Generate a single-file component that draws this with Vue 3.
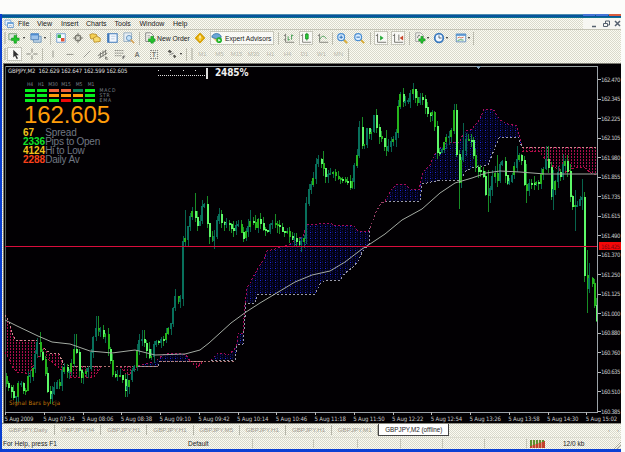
<template>
  <div class="screen">
    <svg class="defs" width="0" height="0">
      <symbol id="chart-add" viewBox="0 0 14 14">
        <path d="M1 2h9v7H1z" fill="#dfe6df" stroke="#779977" />
        <path d="M7 4h3v3h3v3h-3v3H7v-3H4V7h3z" fill="#1fc32a" stroke="#0d8a1a" stroke-width=".6" />
      </symbol>
      <symbol id="profiles" viewBox="0 0 14 14">
        <path d="M4 5h9v7H4z" fill="#bdd3e6" stroke="#6d94b6" />
        <path d="M1 2h9v7H1z" fill="#9dc3ea" stroke="#4b80b8" />
        <path d="M1 2h9v2H1z" fill="#4f8dd0" />
      </symbol>
      <symbol id="market" viewBox="0 0 14 14">
        <path d="M2 2h10v10H2z" fill="#f3f8ff" stroke="#6c9cd0" />
        <path d="M3 3h4v4H3z" fill="#2cb04b" />
        <path d="M7 7h4v4H7z" fill="#e05235" />
      </symbol>
      <symbol id="target" viewBox="0 0 14 14">
        <circle cx="7" cy="7" r="3.3" fill="none" stroke="#77776e" stroke-width="1.5" />
        <path d="M7 1v5M7 8v5M1 7h5M8 7h5" stroke="#77776e" />
      </symbol>
      <symbol id="folders" viewBox="0 0 14 14">
        <path d="M1 3l3-1 5 1v5H2z" fill="#f5d052" stroke="#b98c26" />
        <path d="M5 7l4-2 4 2v4l-7 1z" fill="#f7da6b" stroke="#b98c26" />
      </symbol>
      <symbol id="terminal" viewBox="0 0 14 14">
        <path d="M2 2h11v10H2z" fill="#f4f8ff" stroke="#3e78ba" stroke-width="1.2" />
        <path d="M2 2h2v10H2z" fill="#3e78ba" />
        <path d="M6 5h5M6 8h4" stroke="#bacbe0" />
      </symbol>
      <symbol id="tester" viewBox="0 0 14 14">
        <path d="M1 1h9v10H1z" fill="#e6edf3" stroke="#8fa9bf" />
        <circle cx="7" cy="7" r="3" fill="#c5e2fa" stroke="#5f8db8" />
        <path d="M9 9l4 4" stroke="#d8a65a" stroke-width="2" />
      </symbol>
      <symbol id="order" viewBox="0 0 14 14">
        <path d="M2 1h6l3 3v7H2z" fill="#f6f6f0" stroke="#777" />
        <path d="M4 4h3M4 6h5" stroke="#888" stroke-width=".7" />
        <path d="M8 5h3v3h2v3h-2v2H8v-2H5V8h3z" fill="#20c12a" stroke="#118419" stroke-width=".5" />
      </symbol>
      <symbol id="caution" viewBox="0 0 14 14">
        <path d="M7 2l5 5-5 5-5-5z" fill="#f6c425" stroke="#d7a000" stroke-linejoin="round" stroke-width="2" />
        <path d="M7 4v3.5M7 9v1" stroke="#fff" stroke-width="1.3" />
      </symbol>
      <symbol id="expert" viewBox="0 0 14 14">
        <path d="M2 7l5 5 5-5z" fill="#eac66b" />
        <path d="M1 6c0-5 10-6 11 0L6 8z" fill="#6ba6d6" stroke="#3c78ab" />
        <circle cx="9.5" cy="9.5" r="3.3" fill="#22b42a" />
        <path d="M8.5 7.8l2.8 1.7-2.8 1.7z" fill="#fff" />
      </symbol>
      <symbol id="bars" viewBox="0 0 14 14">
        <path d="M3 2v10h10M1 4h2M1 9h2" fill="none" stroke="#777770" />
        <path d="M6 5v5M6 9h2M10 3v6M10 4h2" stroke="#3b9a4a" />
      </symbol>
      <symbol id="candles" viewBox="0 0 14 14">
        <path d="M3 2v10h10M1 4h2" fill="none" stroke="#777770" />
        <path d="M8 1v9" stroke="#187c24" />
        <path d="M6.5 2.500h3v5.500h-3z" fill="#2bd03a" stroke="#158c20" />
      </symbol>
      <symbol id="line" viewBox="0 0 14 14">
        <path d="M3 2v10h10M1 4h2" fill="none" stroke="#777770" />
        <path d="M3 9q4-8 8-1" fill="none" stroke="#4a9a55" />
      </symbol>
      <symbol id="zoom-in" viewBox="0 0 14 14">
        <path d="M8 8l5 5" stroke="#d8ab35" stroke-width="2.4" />
        <circle cx="6" cy="6" r="4" fill="#d7ecff" stroke="#4c8fd2" stroke-width="1.4" />
        <path d="M4 6h4M6 4v4" stroke="#2e6fb8" stroke-width="1.2" />
      </symbol>
      <symbol id="zoom-out" viewBox="0 0 14 14">
        <path d="M8 8l5 5" stroke="#d8ab35" stroke-width="2.4" />
        <circle cx="6" cy="6" r="4" fill="#d7ecff" stroke="#4c8fd2" stroke-width="1.4" />
        <path d="M4 6h4" stroke="#2e6fb8" stroke-width="1.2" />
      </symbol>
      <symbol id="scroll" viewBox="0 0 14 14">
        <path d="M3 2v10h10M1 4h2" fill="none" stroke="#666660" />
        <path d="M6 4l4 3-4 3z" fill="#23a936" />
      </symbol>
      <symbol id="shift" viewBox="0 0 14 14">
        <path d="M3 2v10h10M1 4h2M8 3v7" fill="none" stroke="#666660" />
        <path d="M13 4L9 7l4 3z" fill="#c8452a" />
      </symbol>
      <symbol id="indicator" viewBox="0 0 14 14">
        <path d="M2 1h6l3 3v7H2z" fill="#f2f2ec" stroke="#999" />
        <path d="M4 7q1-5 3-3" fill="none" stroke="#666" />
        <path d="M8 5h2.500v3H13v2.500h-2.500V13H8v-2.500H5.500V8H8z" fill="#22bd2c" stroke="#118419" stroke-width=".5" />
      </symbol>
      <symbol id="clock" viewBox="0 0 14 14">
        <circle cx="7" cy="7" r="5" fill="#eef6ff" stroke="#3878bd" stroke-width="2" />
        <path d="M7 4v3h3" fill="none" stroke="#456" />
      </symbol>
      <symbol id="template" viewBox="0 0 14 14">
        <path d="M1.500 2.500h11v9h-11z" fill="#f1f7fd" stroke="#5785b4" />
        <path d="M1 2h12v2.500H1z" fill="#5b96d0" />
        <path d="M3 7l2-1 2 1 3-1" fill="none" stroke="#d06840" />
        <path d="M3 10l3-1 4 .5" fill="none" stroke="#3b9a4a" />
      </symbol>
      <symbol id="cursor" viewBox="0 0 14 14">
        <path d="M5 2v9l2-2 2 4 1.500-1-2-3.500h3z" fill="#333" />
      </symbol>
      <symbol id="cross" viewBox="0 0 14 14">
        <path d="M7 .5v5M7 8.500v5M.5 7h5M8.500 7h5" stroke="#777770" />
      </symbol>
      <symbol id="vline" viewBox="0 0 14 14"><path d="M7 3v8" stroke="#8a8a82" /></symbol>
      <symbol id="hline" viewBox="0 0 14 14"><path d="M3 7.500h8" stroke="#8a8a82" /></symbol>
      <symbol id="trend" viewBox="0 0 14 14"><path d="M3 11l8-8" stroke="#8a8a82" /></symbol>
      <symbol id="channel" viewBox="0 0 14 14">
        <path d="M1 9l10-6M2 12l10-6M4 5v6M7 3v7M10 2v6M10 10v3h3M10 11h2" fill="none" stroke="#6e6e68" />
      </symbol>
      <symbol id="fibo" viewBox="0 0 14 14">
        <path d="M1 3h10M1 6h10M1 9h8" stroke="#777770" stroke-dasharray="1.500 .6" />
        <path d="M10.500 13V9.500H13M10.500 11H12" fill="none" stroke="#555" />
      </symbol>
      <symbol id="arrows" viewBox="0 0 14 14">
        <path d="M2 4l2-2 3 2-2 2zM8 9l2-1 2 2-2 2z" fill="#55554f" />
        <path d="M4 8l5-2" stroke="#777" />
      </symbol>
      <symbol id="sheet" viewBox="0 0 14 14">
        <path d="M1.500 1.500h8v7h-8z" fill="#eaf4ff" stroke="#5a94cf" />
        <path d="M5 5h8v7H5z" fill="#f3f9ff" stroke="#3f7fc4" />
        <path d="M5 5h8v2H5z" fill="#6aa4dc" />
        <path d="M7 10l2-1 2 1" stroke="#888" fill="none" />
      </symbol>
    </svg>

    <div class="window">
      <div class="titlebar"><span class="min"></span><span class="max"></span><span class="close"></span></div>

      <div class="menubar">
        <svg class="doc" width="10" height="10"><use href="#sheet" /></svg>
        <span v-for="m in menus" :key="m.label" class="menu" :style="{ width: m.w + 'px' }">{{ m.label }}</span>
        <span class="mdi">
          <svg width="38" height="11" fill="none" stroke="#55606e">
            <path d="M9 8.500h4" stroke-width="1.500" />
            <path d="M20.500 5.500h4v3h-4zM22.500 5v-2h4v4h-2" />
            <path d="M32 3l5 5M37 3l-5 5" stroke-width="1.500" />
          </svg>
        </span>
      </div>

      <div v-for="(row, r) in toolbars" :key="r" class="toolbar">
        <div
          v-for="(t, i) in row"
          :key="i"
          class="tool"
          :class="[t.type, { on: t.on }]"
          :style="{ width: t.w + 'px' }"
        >
          <svg v-if="t.icon" width="12" height="12"><use :href="'#' + t.icon" /></svg>
          <span v-if="t.text">{{ t.text }}</span>
        </div>
      </div>

      <div class="chart">
        <svg width="618" height="360" viewBox="3 63 618 360" shape-rendering="crispEdges">
          <defs>
            <pattern id="blue" width="5" height="6" patternUnits="userSpaceOnUse">
              <rect width="5" height="6" fill="#010112" />
              <path d="M.5 0v6" stroke="#101066" stroke-dasharray="1 1" />
              <path d="M.5 4v1" stroke="#1c28e0" />
              <path d="M2.500 0v6" stroke="#0a0a4c" stroke-dasharray="2 1" />
            </pattern>
            <pattern id="red" width="3" height="3" patternUnits="userSpaceOnUse">
              <rect x="1" y="0" width="1" height="2" fill="#a80d4c" />
            </pattern>
          </defs>
          <rect x="3" y="63" width="618" height="360" fill="#020003" />
          <path d="M3 63.500h618M3.500 63v360" stroke="#77776f" />
          <path d="M5 66.500h592" stroke="#9aa3a3" />
          <path d="M5.500 66v346" stroke="#55605f" />
          <path d="M475 66h6l-3 3z" fill="#7d9bb0" />

          <path v-for="(c, i) in clouds" :key="'c' + i" :d="area(c)" :fill="`url(#${c.kind})`" />
          <g fill="none" stroke-dasharray="2 2">
            <template v-for="(c, i) in clouds" :key="'e' + i">
              <path :d="'M' + c.top" :stroke="c.kind === 'blue' ? '#a50b58' : '#c98b8b'" />
              <path :d="'M' + c.bottom" :stroke="c.kind === 'blue' ? '#9a9aa8' : '#b50c48'" />
            </template>
            <path d="M72 366.500H158M160 361.500H236" stroke="#ad7070" />
            <path d="M370 228L376 212L381 203L386 201" stroke="#9c4068" />
          </g>

          <g v-for="(c, i) in candles" :key="i">
            <rect :x="c.x" :y="c.high" width="1" :height="c.low - c.high" :fill="c.up ? '#07634d' : '#188c25'" />
            <rect :x="c.x - (c.up ? 1 : 0)" :y="c.y" :width="2" :height="c.h" :fill="c.fill" />
          </g>
          <path :d="'M' + average" fill="none" stroke="#a3aaa2" shape-rendering="auto" />
          <rect x="5" y="246" width="593" height="1" fill="#d80d3c" />

          <path d="M597.500 66V412.500M5 412.500H598" fill="none" stroke="#9ba2a8" />
          <g class="axis">
            <template v-for="(p, i) in prices" :key="p">
              <path :d="`M598 ${79.5 + Math.round(i * 19.53)}h3`" stroke="#b9b9b9" />
              <text x="601" :y="81.5 + i * 19.53" textLength="19.500">{{ p }}</text>
            </template>
            <template v-for="(t, i) in times" :key="t">
              <path :d="`M${Math.round(i * 38.75) + 5.5} 412v3`" stroke="#b9b9b9" />
              <text :x="4.5 + i * 38.75" y="420.800" :textLength="i ? 31.5 : 29">{{ t }}</text>
            </template>
          </g>
          <rect x="599" y="242" width="22" height="8" fill="#f40808" />
          <text class="small" x="601" y="248.500" textLength="19" fill="#7c0610">161.425</text>

          <text class="small" x="8" y="73" textLength="119.500" fill="#dedede">GBPJPY,M2&nbsp; 162.629 162.647 162.599 162.605</text>
          <g fill="#ddd">
            <rect v-for="x in [158, 170, 183, 195]" :key="x" :x="x" y="70" width="1" height="1" />
            <rect v-for="n in 24" :key="'d' + n" :x="156 + n * 2" y="75" width="1" height="1" />
            <rect x="206" y="68" width="2" height="11" />
          </g>
          <text class="percent" x="215" y="76" textLength="33.500">2485%</text>

          <g v-for="(s, i) in signals" :key="s.name">
            <text class="small head" :x="s.tx" y="86.300" text-anchor="middle">{{ s.name }}</text>
            <rect v-for="(f, k) in s.cells" :key="k" :x="25 + i * 12" :y="89 + k * 5" width="10" height="3" :fill="f" />
          </g>
          <text class="small head" x="99.500" y="92" textLength="16">MACD</text>
          <text class="small head" x="99.500" y="97" textLength="10">STR</text>
          <text class="small head" x="99.500" y="102" textLength="11.500">EMA</text>
          <text x="24" y="123" font-size="24" textLength="86" fill="#ff9d0a">162.605</text>
          <g v-for="(s, i) in stats" :key="s.label" font-size="10">
            <text x="23" :y="136 + i * 9.1" :textLength="s.w" font-weight="bold" :fill="s.color">{{ s.value }}</text>
            <text x="45.200" :y="136 + i * 9.1" :textLength="s.lw" fill="#707782">{{ s.label }}</text>
          </g>
          <text class="small" x="9" y="405" textLength="51" fill="#c77a08">Signal Bars by cja</text>
        </svg>
      </div>

      <div class="tabs">
        <span v-for="(t, i) in tabs" :key="i" class="tab">{{ t }}</span>
        <span class="tab active">GBPJPY,M2 (offline)</span>
        <span class="nav">‹ &nbsp;&nbsp; ›</span>
      </div>

      <div class="status">
        <span class="help">For Help, press F1</span>
        <span class="profile">Default</span>
        <span class="cell c1"></span>
        <span class="cell c2"></span>
        <span class="cell c2"></span>
        <span class="cell c3"></span>
        <span class="cell c3"></span>
        <span class="cell c3"></span>
        <span class="cell net">
          <svg width="15" height="8" shape-rendering="crispEdges">
            <path d="M0 4H15" stroke="#5c8f2c" stroke-width="8" stroke-dasharray="2 1" />
            <path d="M0 8V6L15 1V8z" fill="#c2412c" />
            <path d="M2.500 0v8M5.500 0v8M8.500 0v8M11.500 0v8" stroke="#e8c9a8" stroke-width=".6" />
          </svg>
          <span>12/0 kb</span>
        </span>
        <svg class="grip-corner" width="8" height="8"><path d="M1 8l7-7M4 8l4-4" stroke="#a5a598" /></svg>
      </div>
      <div class="bottom-edge"></div>
    </div>
  </div>
</template>

<script setup>
const menus = [
  { label: 'File', w: 19 },
  { label: 'View', w: 24 },
  { label: 'Insert', w: 25 },
  { label: 'Charts', w: 28.5 },
  { label: 'Tools', w: 25 },
  { label: 'Window', w: 33.5 },
  { label: 'Help', w: 20 }
]

const icon = (name, w = 14, on = false) => ({ type: 'icon', icon: name, w, on })
const gap = (w = 3) => ({ type: 'gap', w })
const sep = (w = 7) => ({ type: 'sep', w })
const caret = (w = 5) => ({ type: 'caret', w })
const label = (text, w) => ({ type: 'label', text, w })

const toolbars = [
  [
    { type: 'grip', w: 5 }, icon('chart-add'), caret(), gap(), icon('profiles', 13), caret(), sep(),
    icon('market'), gap(), icon('target'), gap(), icon('folders'), gap(), icon('terminal'), gap(), icon('tester'), sep(),
    icon('order'), label('New Order', 34), gap(2), icon('caution'), gap(),
    { type: 'button', icon: 'expert', text: 'Expert Advisors', w: 64, on: true }, sep(8),
    icon('bars'), gap(), icon('candles', 14, true), gap(), icon('line'), sep(5),
    icon('zoom-in'), gap(), icon('zoom-out'), sep(8),
    icon('scroll', 14, true), gap(), icon('shift', 14, true), sep(9),
    icon('indicator', 12), caret(3), gap(4), icon('clock', 12), caret(4), gap(6), icon('template', 12), caret(4), sep(4)
  ],
  [
    { type: 'grip', w: 5 }, icon('cursor', 15, true), gap(), icon('cross'), sep(6), gap(1),
    icon('vline'), gap(), icon('hline'), gap(), icon('trend'), gap(2), icon('channel'), gap(), icon('fibo'), gap(),
    { type: 'letter', text: 'A', w: 14 }, gap(), { type: 'letter boxed', text: 'T', w: 14 }, gap(4),
    icon('arrows'), caret(4), sep(7), { type: 'grip', w: 4 },
    ...['M1', 'M5', 'M15', 'M30', 'H1', 'H4', 'D1', 'W1', 'MN'].map((text) => ({ type: 'period', text, w: 17 })),
    sep(3)
  ]
]

const prices = [
  '162.470', '162.345', '162.225', '162.105', '161.980', '161.855', '161.735', '161.615', '161.490',
  '161.370', '161.250', '161.125', '161.000', '160.880', '160.760', '160.635', '160.510', '160.385'
]
const times = [
  '5 Aug 2009', '5 Aug 07:34', '5 Aug 08:06', '5 Aug 08:38', '5 Aug 09:10', '5 Aug 09:42', '5 Aug 10:14', '5 Aug 10:46',
  '5 Aug 11:18', '5 Aug 11:50', '5 Aug 12:22', '5 Aug 12:54', '5 Aug 13:26', '5 Aug 13:58', '5 Aug 14:30', '5 Aug 15:02'
]

const G = '#06f01e'
const O = '#ff9c08'
const signals = [
  { name: 'H4', tx: 30, cells: [G, G, G] },
  { name: 'H1', tx: 41, cells: [G, G, G] },
  { name: 'M30', tx: 53, cells: ['#f0643c', O, G] },
  { name: 'M15', tx: 66, cells: ['#f0643c', O, '#f00808'] },
  { name: 'M5', tx: 79, cells: ['#0b8058', O, G] },
  { name: 'M1', tx: 91, cells: [G, G, G] }
]

const stats = [
  { value: '67', w: 11, color: '#f2c21c', label: 'Spread', lw: 31.5 },
  { value: '2336', w: 22, color: '#10e428', label: 'Pips to Open', lw: 55 },
  { value: '4124', w: 22, color: '#f2c21c', label: 'Hi to Low', lw: 39.5 },
  { value: '2288', w: 22, color: '#f8401a', label: 'Daily Av', lw: 34.5 }
]

const tabs = ['GBPJPY,Daily', 'GBPJPY,H4', 'GBPJPY,H1', 'GBPJPY,H1', 'GBPJPY,M5', 'GBPJPY,H1', 'GBPJPY,H1', 'GBPJPY,M1']

const clouds = [
  {
    kind: 'red',
    top: '5 315 9 322 12 332 15 340 37 340 42 347 50 353 59 354 64 365 72 366 102 366',
    bottom: '5 352 8 357 13 368 17 372 30 374 36 358 42 355 52 362 58 367 64 372 70 377 94 377 102 366'
  },
  { kind: 'red', top: '120 366 139 366', bottom: '120 366 126 374 131 374 139 366' },
  { kind: 'blue', top: '138 366 154 362 163 355 172 353 180 353 186 355 190 361', bottom: '138 366 158 366 160 361 190 361' },
  { kind: 'red', top: '190 361 203 361', bottom: '190 361 197 368 203 361' },
  {
    kind: 'blue',
    top: '211 360 217 354 222 353 228 355 234 350 237 344 238 334 243 333 245 304 247 288 251 281 256 272 258 268 264 259 267 251 275 249 290 244 296 240 303 236 307 225 330 223 336 226 345 225 354 226 358 231 368 232 370 228',
    bottom: '211 360 235 360 237 345 243 344 246 303 255 303 258 294 315 294 320 284 326 280 340 280 345 273 352 268 359 260 362 252 369 244 370 228'
  },
  {
    kind: 'blue',
    top: '385 201 391 190 397 184 404 184 411 189 419 190 423 172 430 165 435 154 440 148 447 143 460 142 464 131 472 129 480 119 484 109 493 109 500 120 508 124 517 126 519 135 522 147',
    bottom: '385 201 420 201 422 184 436 181 443 180 460 180 466 171 472 168 488 165 494 150 499 138 518 137 522 147'
  },
  { kind: 'red', top: '522 147 597 147', bottom: '522 151 540 152 546 161 554 167 564 173 576 167 585 168 592 174 597 175' }
]

const average =
  '5 320 17 326 38 336 52 342 70 344 90 351 112 353 135 350 155 355 185 354 200 350 209 343 231 323 246 312 260 303 280 291 295 282 312 275 330 271 345 262 362 249 370 244 385 234 402 220 422 209 440 193 455 183 472 178 486 173 500 171 520 172 545 174 597 174'

// close price path, x/y pairs in chart pixels
const path = [
  5, 378, 9, 386, 13, 396, 17, 394, 20, 377, 23, 386, 25, 397, 29, 374, 32, 376, 35, 358, 37, 345, 39, 342, 41, 352,
  43, 360, 46, 375, 48, 391, 51, 397, 54, 390, 57, 382, 60, 384, 62, 369, 66, 366, 69, 372, 72, 362, 74, 344, 77, 354,
  79, 368, 81, 380, 84, 370, 88, 368, 91, 360, 93, 340, 96, 331, 99, 329, 103, 335, 107, 337, 110, 355, 113, 374,
  118, 374, 122, 378, 126, 389, 129, 380, 133, 368, 136, 362, 139, 344, 142, 334, 145, 345, 148, 355, 151, 362,
  153, 345, 158, 341, 162, 341, 166, 334, 170, 325, 173, 320, 175, 292, 178, 302, 181, 297, 183, 246, 185, 240,
  188, 230, 192, 210, 195, 209, 197, 225, 201, 222, 203, 203, 206, 203, 209, 235, 213, 241, 216, 236, 219, 213,
  222, 221, 227, 223, 231, 226, 233, 234, 237, 224, 240, 222, 244, 240, 248, 227, 252, 222, 256, 227, 259, 217,
  263, 226, 268, 230, 272, 222, 276, 223, 281, 230, 287, 232, 290, 237, 295, 241, 300, 244, 305, 240, 306, 208,
  309, 190, 313, 183, 316, 166, 319, 158, 322, 162, 325, 174, 329, 173, 333, 172, 337, 176, 342, 180, 347, 182,
  350, 189, 353, 180, 355, 165, 358, 155, 360, 127, 363, 144, 366, 144, 368, 127, 371, 134, 375, 116, 379, 136,
  383, 142, 387, 150, 391, 144, 396, 139, 398, 118, 400, 92, 403, 100, 407, 104, 411, 91, 414, 87, 417, 106,
  420, 96, 424, 103, 428, 112, 433, 115, 435, 130, 437, 150, 440, 153, 443, 148, 446, 140, 450, 134, 453, 130,
  455, 110, 457, 158, 460, 186, 462, 155, 464, 150, 467, 138, 471, 138, 473, 150, 476, 167, 481, 172, 484, 175,
  487, 206, 490, 192, 494, 172, 498, 178, 500, 165, 503, 163, 507, 182, 512, 180, 516, 160, 519, 155, 522, 162,
  526, 192, 529, 183, 534, 186, 539, 183, 543, 168, 547, 161, 550, 172, 551, 197, 555, 184, 558, 170, 561, 178,
  565, 162, 567, 165, 570, 192, 574, 208, 579, 204, 582, 198, 583.5, 192, 585, 290, 588, 290, 590, 277, 592, 275,
  594, 297, 597, 320, 599, 334
]

// extra long shadows: x -> [high, low]
const shadows = {
  39: [332, 356], 51: [386, 404], 75: [334, 354], 97: [316, 332], 143: [330, 346], 126: [374, 397],
  185: [210, 246], 194: [193, 214], 206: [196, 212], 214: [230, 249], 250: [210, 232], 274: [214, 226],
  323: [151, 170], 361: [117, 145], 386: [130, 156], 413: [83, 100], 458: [150, 209], 463: [123, 158],
  487: [170, 212], 498: [155, 180], 516: [146, 170], 526: [164, 203], 547: [146, 166], 553: [170, 210],
  563: [154, 180], 575: [190, 231], 582: [179, 210], 587: [250, 313], 589: [263, 292]
}

function priceAt(x) {
  for (let i = 2; i < path.length; i += 2) {
    if (x <= path[i]) {
      const t = (x - path[i - 2]) / (path[i] - path[i - 2])
      return path[i - 1] + t * (path[i + 1] - path[i - 1])
    }
  }
  return path[path.length - 1]
}

const noise = (n) => {
  const v = Math.sin(n * 127.1) * 43758.5453
  return v - Math.floor(v)
}

const candles = []
let last = 376
for (let i = 0; i < 245; i++) {
  const x = Math.round(6 + i * 2.42)
  const open = last
  const close = priceAt(x + 0.8) + (noise(i + 400) - 0.5) * 5
  last = close
  const y = Math.round(Math.min(open, close))
  const h = Math.max(2, Math.round(Math.abs(open - close)) + 1)
  const up = close < open
  let high = y - Math.round(noise(i + 90) * 7)
  let low = y + h + Math.round(noise(i + 250) * 7)
  for (const [sx, [top, bottom]] of Object.entries(shadows)) {
    if (Math.abs(sx - x) <= 1.2) {
      high = Math.min(high, top)
      low = Math.max(low, bottom)
    }
  }
  let fill = up ? '#08705c' : '#5df868'
  if (noise(i + 33) > 0.66) fill = '#25b51c'
  candles.push({ x, y, h, high, low, up, fill })
}

function area(c) {
  const p = c.bottom.split(' ')
  const back = []
  for (let i = p.length - 2; i >= 0; i -= 2) back.push(p[i], p[i + 1])
  return `M${c.top} L${back.join(' ')}Z`
}
</script>

<style>
body {
  background: #fcfcfa;
  overflow: hidden;
}
</style>

<style scoped>
.screen {
  width: 625px;
  height: 452px;
  padding-top: 14px;
  box-sizing: border-box;
  background: #fcfcfa;
  font: 7px "Liberation Sans", Arial, sans-serif;
  color: #222;
  white-space: nowrap;
}

.defs {
  position: absolute;
}

.window {
  width: 621px;
  height: 438px;
  box-sizing: border-box;
  border-left: 2px solid #0a3fd0;
  display: flex;
  flex-direction: column;
  background:
    linear-gradient(#f7f3a0, #f7f3a0) 0 0 / 0 0 no-repeat,
    conic-gradient(#fbfbf2 25%, #d9d9cc 0 50%, #fbfbf2 0 75%, #d9d9cc 0) 0 0 / 2px 2px;
}

.titlebar {
  height: 4px;
  flex: none;
  display: flex;
  justify-content: flex-end;
  gap: 1px;
  background: linear-gradient(#4c8cae 0 1px, #07549c 1px 3px, #0d7290 3px);
}

.titlebar span {
  width: 12px;
  height: 2px;
  background: #4774d5;
}

.titlebar .close {
  background: #d95c3e;
}

.menubar {
  height: 12px;
  flex: none;
  display: flex;
  align-items: center;
  box-sizing: border-box;
  border-bottom: 1px solid #c4c4b6;
}

.doc {
  margin: 0 4px 0 2px;
}

.menu {
  flex: none;
}

.mdi {
  margin-left: auto;
  height: 11px;
  background: #f6f6f2;
}

.toolbar {
  height: 16px;
  flex: none;
  display: flex;
  align-items: center;
}

.tool {
  height: 14px;
  flex: none;
  display: flex;
  align-items: center;
  justify-content: center;
  box-sizing: border-box;
}

.tool.on {
  background: rgba(255, 255, 255, 0.65);
  border: 1px solid #c6c6ba;
}

.tool.label {
  justify-content: flex-start;
  font-size: 6.8px;
}

.tool.button {
  justify-content: flex-start;
  gap: 2px;
  font-size: 6.7px;
}

.tool.grip::before {
  content: '';
  width: 2px;
  height: 12px;
  background: #c9c9bd;
}

.tool.sep::before {
  content: '';
  width: 1px;
  height: 13px;
  background: #bdbdb0;
}

.tool.caret::before {
  content: '';
  border: 1.5px solid transparent;
  border-top: 2px solid #222;
  border-bottom: 0;
}

.tool.letter {
  font-weight: bold;
  color: #777770;
}

.tool.boxed span {
  border: 1px dotted #888;
  padding: 0 1px;
  line-height: 7px;
}

.tool.period {
  color: #bcbcb0;
  font-size: 6px;
}

.chart {
  height: 360px;
  flex: none;
  margin: 1px 0 0 1px;
}

.chart svg {
  display: block;
}

.axis text,
.small {
  font-size: 6px;
  font-family: "DejaVu Sans Condensed", "DejaVu Sans", sans-serif;
}

.axis text {
  fill: #c8c8c8;
}

.small.head {
  fill: #7b828c;
  font-size: 5px;
}

.percent {
  font: bold 10px "DejaVu Sans Condensed", "DejaVu Sans", sans-serif;
  fill: #eee;
}

.tabs {
  height: 14px;
  flex: none;
  display: flex;
  box-sizing: border-box;
  border-top: 1px solid #8b8b80;
  color: #a09a90;
  font-size: 6.2px;
}

.tab {
  width: 46.2px;
  flex: none;
  height: 10px;
  margin-top: 1px;
  box-sizing: border-box;
  border-right: 1px solid #b5b5a8;
  text-align: center;
  line-height: 9px;
}

.tab:first-child {
  width: 53px;
}

.tab.active {
  width: 71px;
  height: 12px;
  margin-top: 0;
  background: #fff;
  color: #222;
  border: 1px solid #444;
  border-top: 0;
  line-height: 11px;
  font-size: 6.3px;
}

.nav {
  margin-left: auto;
  padding-right: 2px;
  line-height: 11px;
}

.status {
  height: 12px;
  flex: none;
  display: flex;
  align-items: center;
  box-sizing: border-box;
  border-top: 1px solid #dcdcd0;
  font-size: 6.5px;
}

.help {
  width: 185px;
  padding-left: 1px;
}

.profile {
  width: 64px;
}

.cell {
  height: 9px;
  box-sizing: border-box;
  border-left: 1px solid #c5c5b8;
}

.c1 {
  width: 61px;
}

.c2 {
  width: 43.5px;
}

.c3 {
  width: 42px;
}

.net {
  flex: 1;
  display: flex;
  align-items: center;
  gap: 18px;
  padding-left: 3px;
}

.grip-corner {
  align-self: flex-end;
}

.bottom-edge {
  flex: 1;
  background: #0c40d4;
}
</style>
